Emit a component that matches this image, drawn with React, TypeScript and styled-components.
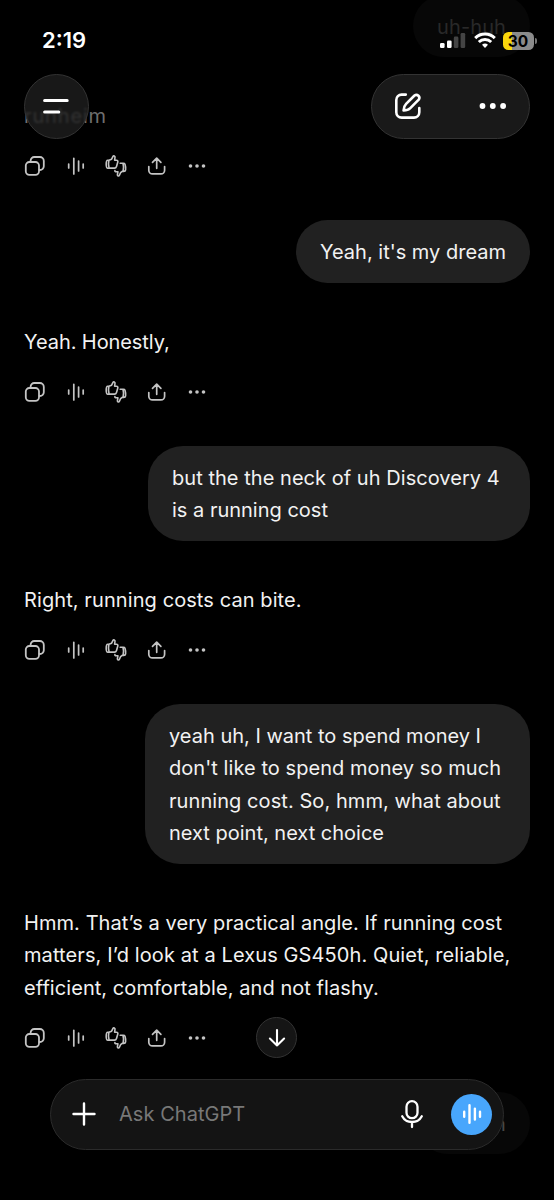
import React from "react";
import styled, { createGlobalStyle } from "styled-components";

const GlobalStyle = createGlobalStyle`
  * { box-sizing: border-box; }
  body { margin: 0; background: #000; }
`;

const Screen = styled.main`
  position: relative;
  width: 554px;
  height: 1200px;
  overflow: hidden;
  background: #000;
  color: #f2f2f2;
  font-family: Inter, "Liberation Sans", sans-serif;
`;

const Thread = styled.div`
  display: flex;
  flex-direction: column;
  gap: 43px;
  margin-top: -5.5px;
  padding: 0 24px;
`;

const Bubble = styled.div<{ $tone?: "top" | "bottom"; $width?: number }>`
  align-self: flex-end;
  width: ${(p) => (p.$width ? `${p.$width}px` : "auto")};
  padding: 16px 24px 14px;
  border-radius: ${(p) => (p.$width ? 35 : 32)}px;
  background: ${(p) => (p.$tone ? "#070707" : "#212121")};
  color: ${(p) => (p.$tone === "top" ? "#292929" : p.$tone === "bottom" ? "#484848" : "#f2f2f2")};
`;

const Reply = styled.div`
  display: flex;
  flex-direction: column;
  gap: 22.5px;
`;

const Text = styled.div<{ $dim?: boolean }>`
  color: ${(p) => (p.$dim ? "#6e6e6e" : "inherit")};
`;

const Line = styled.div<{ $ls?: number }>`
  height: 32.5px;
  line-height: 33.5px;
  font-size: 20px;
  white-space: nowrap;
  letter-spacing: ${(p) => p.$ls ?? 0}px;
`;

const Actions = styled.div`
  display: flex;
  align-items: center;
  gap: 18.5px;
  height: 22px;
  color: #c4c4c4;
  svg { display: block; overflow: visible; }
`;

const StatusBar = styled.div`
  position: absolute;
  inset: 0 0 auto 0;
  height: 72px;
  display: flex;
  justify-content: space-between;
  padding: 28px 17px 0 42px;
`;

const Time = styled.div`
  height: 26px;
  line-height: 25px;
  font-size: 22px;
  font-weight: 600;
  color: #fff;
`;

const StatusIcons = styled.div`
  display: flex;
  align-items: center;
  height: 25px;
  gap: 7.5px;
`;

const BatteryWrap = styled.div`
  display: flex;
  align-items: center;
  gap: 1px;
`;

const Battery = styled.div`
  width: 31px;
  height: 18px;
  border-radius: 5.5px;
  background: linear-gradient(90deg, #fbd70c 0 9.5px, #8b8b8b 9.5px);
  color: #000;
  font-size: 15.5px;
  font-weight: 700;
  line-height: 19px;
  text-align: center;
  padding-right: 1px;
`;

const BatteryTip = styled.div`
  width: 2px;
  height: 6px;
  border-radius: 0 2px 2px 0;
  background: #777;
`;

const Header = styled.header`
  position: absolute;
  inset: 74px 24px auto 24px;
  display: flex;
  justify-content: space-between;
`;

const Glass = styled.button`
  display: flex;
  align-items: center;
  margin: 0;
  padding: 0;
  border: 1px solid #333;
  background: #191919;
  color: #fff;
`;

const MenuButton = styled(Glass)`
  justify-content: center;
  width: 65px;
  height: 65px;
  padding: 0 1px 1px 0;
  border-radius: 50%;
  background: rgba(32, 32, 32, 0.76);
  backdrop-filter: blur(1.2px);
`;

const HeaderPill = styled(Glass)`
  justify-content: space-between;
  width: 159px;
  height: 65px;
  padding: 0 22px 1px;
  border-radius: 33px;
`;

const ScrollButton = styled(Glass)`
  position: absolute;
  left: 256px;
  top: 1017px;
  justify-content: center;
  width: 41px;
  height: 41px;
  border-radius: 50%;
  background: #151515;
`;

const Composer = styled.div`
  position: absolute;
  left: 50px;
  top: 1079px;
  display: flex;
  align-items: center;
  width: 454px;
  height: 71px;
  padding: 0 11px 1px 21px;
  border: 1px solid #2b2b2b;
  border-radius: 36px;
  background: #141414;
  color: #fff;
`;

const Placeholder = styled.div`
  flex: 1;
  padding-left: 23px;
  font-size: 20px;
  line-height: 28px;
  letter-spacing: 0.05px;
  color: #787878;
`;

const VoiceButton = styled.button`
  display: flex;
  align-items: center;
  justify-content: center;
  width: 41px;
  height: 41px;
  margin: 0 0 0 27px;
  padding: 0;
  border: 0;
  border-radius: 50%;
  background: #48a6fc;
  color: #fff;
`;

const stroke = {
  fill: "none",
  stroke: "currentColor",
  strokeLinecap: "round" as const,
  strokeLinejoin: "round" as const,
};

function MessageActions() {
  return (
    <Actions>
      <svg width="22" height="22" viewBox="0 0 22 22" {...stroke} strokeWidth="1.8">
        <rect x="1.8" y="7" width="13.2" height="12.8" rx="3.6" />
        <path d="M6.6 6.4V5.7a3.7 3.7 0 0 1 3.7-3.7h5.5a4 4 0 0 1 4 4v5.2a3.8 3.8 0 0 1-3.8 3.8h-.6" />
      </svg>
      <svg width="22" height="22" viewBox="0 0 22 22" {...stroke} strokeWidth="1.7">
        <path d="M3.7 9v4M8.8 3.3v15.6M13.6 6.1v9.8M18.2 9v4" />
      </svg>
      <svg width="22" height="22" viewBox="0 0 22 22" {...stroke} strokeWidth="1.6">
        <path d="M3.9 5.3H2.7C1.5 5.3 1.2 7 1.2 9.2s.3 4 1.6 4h1.3c-.7-2.2-.8-5.4-.2-7.9L6.6 4.2 8 1.4c.5-1 2.3-.3 2 1.1L9.6 5.2h1.9c1 0 1.6.7 1.3 1.7l-1.3 4.6c-.3 1-1 1.6-2 1.6H4.1" />
        <path d="M15.2 8.3h3c1 0 1.5.1 1.8.9.7 2 .8 3.8.6 5.7-.1 1-.9 1.5-1.9 1.5h-1.5l-1.6 1.3-1.3 2.8c-.5 1-2.1.4-1.9-.8l.5-2.9h-1.8c-.8 0-1.3-.5-1.2-1.3M18 8.5c.7 2.4.8 5.1.1 7.6" />
      </svg>
      <svg width="22" height="22" viewBox="0 0 22 22" {...stroke} strokeWidth="1.7">
        <path d="M2.8 11.5v3.7a3.7 3.7 0 0 0 3.7 3.7h8.4a3.7 3.7 0 0 0 3.7-3.7v-3.7M10.7 13.3V3.4M6.5 7.3l4.2-4.2 4.2 4.2" />
      </svg>
      <svg width="22" height="22" viewBox="0 0 22 22" fill="currentColor">
        <circle cx="4.5" cy="11" r="1.8" />
        <circle cx="11" cy="11" r="1.8" />
        <circle cx="17.5" cy="11" r="1.8" />
      </svg>
    </Actions>
  );
}

function Signal() {
  return (
    <svg width="26" height="17" viewBox="0 0 26 17">
      <rect x="0" y="11" width="4.6" height="5" rx="1.3" fill="#fff" />
      <rect x="7" y="8.5" width="4.6" height="7.5" rx="1.3" fill="#fff" />
      <rect x="13.8" y="4.6" width="4.6" height="11.4" rx="1.3" fill="#444" />
      <rect x="20.6" y="1" width="4.6" height="15" rx="1.3" fill="#444" />
    </svg>
  );
}

function Wifi() {
  return (
    <svg width="22" height="17" viewBox="0 0 22 17" fill="none" stroke="#fff" strokeWidth="3">
      <path d="M1.2 6.1a14 14 0 0 1 19.6 0" />
      <path d="M4.8 10a9 9 0 0 1 12.4 0" />
      <path d="M8 12.8a4.5 4.5 0 0 1 6 0L11 16Z" fill="#fff" stroke="none" />
    </svg>
  );
}

export default function App() {
  return (
    <>
      <GlobalStyle />
      <Screen>
        <Thread>
          <Bubble $tone="top"><Line $ls={0.1}>uh-huh</Line></Bubble>
          <Reply>
            <Text $dim><Line $ls={0.85}>runheim</Line></Text>
            <MessageActions />
          </Reply>
          <Bubble><Line>Yeah, it's my dream</Line></Bubble>
          <Reply>
            <Text><Line $ls={-0.08}>Yeah. Honestly,</Line></Text>
            <MessageActions />
          </Reply>
          <Bubble $width={382}>
            <Line $ls={0.04}>but the the neck of uh Discovery 4</Line>
            <Line>is a running cost</Line>
          </Bubble>
          <Reply>
            <Text><Line $ls={0.09}>Right, running costs can bite.</Line></Text>
            <MessageActions />
          </Reply>
          <Bubble $width={385}>
            <Line>yeah uh, I want to spend money I</Line>
            <Line $ls={0.06}>don't like to spend money so much</Line>
            <Line $ls={0.07}>running cost. So, hmm, what about</Line>
            <Line>next point, next choice</Line>
          </Bubble>
          <Reply>
            <Text>
              <Line $ls={0.07}>Hmm. That’s a very practical angle. If running cost</Line>
              <Line $ls={0.1}>matters, I’d look at a Lexus GS450h. Quiet, reliable,</Line>
              <Line $ls={0.06}>efficient, comfortable, and not flashy.</Line>
            </Text>
            <MessageActions />
          </Reply>
          <Bubble $tone="bottom"><Line $ls={0.1}>hmmm</Line></Bubble>
        </Thread>

        <StatusBar>
          <Time>2:19</Time>
          <StatusIcons>
            <Signal />
            <Wifi />
            <BatteryWrap>
              <Battery>30</Battery>
              <BatteryTip />
            </BatteryWrap>
          </StatusIcons>
        </StatusBar>

        <Header>
          <MenuButton aria-label="Menu">
            <svg width="28" height="18" viewBox="0 0 28 18" {...stroke} strokeWidth="3">
              <path d="M2.6 3.4h22.6M2.6 15h14.2" />
            </svg>
          </MenuButton>
          <HeaderPill as="div">
            <svg width="28" height="28" viewBox="0 0 28 28" {...stroke} strokeWidth="2.6">
              <path d="M11.8 2.6H7.6a5.3 5.3 0 0 0-5.3 5.3v12.4a5.3 5.3 0 0 0 5.3 5.3H20a5.3 5.3 0 0 0 5.3-5.3v-4.2" />
              <path d="M9.6 18.4c.1-3 .7-4.7 2.5-6.5l8.4-8.4a3 3 0 0 1 4.2 4.2l-8.4 8.4c-1.8 1.8-3.6 2.3-6.7 2.3Z" />
            </svg>
            <svg width="28" height="10" viewBox="0 0 28 10" fill="currentColor">
              <circle cx="3.5" cy="5" r="2.9" />
              <circle cx="13.8" cy="5" r="2.9" />
              <circle cx="24.1" cy="5" r="2.9" />
            </svg>
          </HeaderPill>
        </Header>

        <ScrollButton aria-label="Scroll to bottom">
          <svg width="18" height="20" viewBox="0 0 18 20" {...stroke} strokeWidth="2.1">
            <path d="M9 2v15.4M1.9 10.6 9 17.4l7.1-6.8" />
          </svg>
        </ScrollButton>

        <Composer>
          <svg width="24" height="24" viewBox="0 0 24 24" {...stroke} strokeWidth="2.4">
            <path d="M12 1.5v21M1.5 12h21" />
          </svg>
          <Placeholder>Ask ChatGPT</Placeholder>
          <svg width="24" height="30" viewBox="0 0 24 30" {...stroke} strokeWidth="2.3">
            <rect x="6.5" y="2.2" width="11" height="17" rx="5.5" />
            <path d="M2.2 17.2c2 3.8 5.5 5.8 9.8 5.8s7.8-2 9.8-5.8M12 23v5" />
          </svg>
          <VoiceButton aria-label="Voice">
            <svg width="22" height="22" viewBox="0 0 22 22" {...stroke} strokeWidth="2.4">
              <path d="M3.2 8.7v5M8.5 2.3v17.4M13.9 5.6v11M19 8.7v5" />
            </svg>
          </VoiceButton>
        </Composer>
      </Screen>
    </>
  );
}
